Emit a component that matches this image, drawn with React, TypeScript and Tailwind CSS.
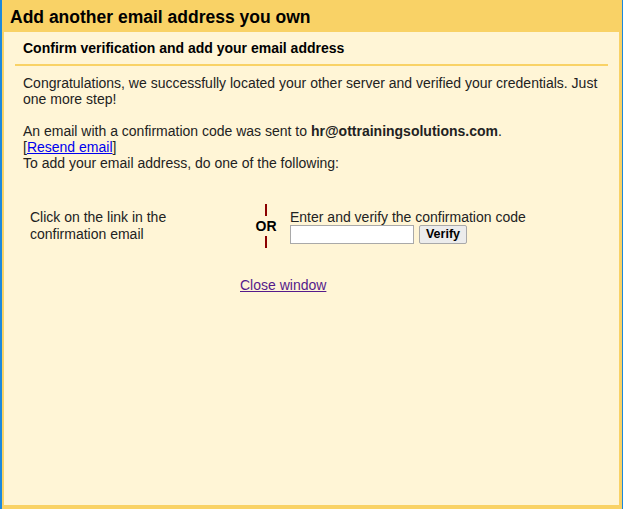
export default function App() {
  return (
    <div className="h-[509px] w-[623px] bg-[#1c88dc] pl-[2px] pr-[1px] font-['Liberation_Sans',Arial,sans-serif] text-[#222]">
      <div className="flex h-full flex-col bg-[#f9d266] px-[2px] pb-[4px] pr-[3px]">
        {/* Title bar */}
        <div className="flex h-[32px] items-center pl-[6px] pt-[2px] text-[17.5px] font-bold text-black">
          Add another email address you own
        </div>

        <div className="flex-1 bg-[#fff5d6] px-[11px] pt-[8px]">
          <div className="border-b-2 border-[#f9d266] px-[8px] pb-[7px] text-[14px] leading-[17px] font-bold text-black">
            Confirm verification and add your email address
          </div>

          <div className="px-[8px] pt-[9px] text-[14px] leading-[16px]">
            <p>
              Congratulations, we successfully located your other server and verified your credentials. Just one more step!
            </p>

            <div className="mt-[16px]">
              <div>
                An email with a confirmation code was sent to <b>hr@ottrainingsolutions.com</b>.
              </div>
              <div>
                [<a href="#" className="text-[#0000ee] underline">Resend email</a>]
              </div>
              <div>To add your email address, do one of the following:</div>
            </div>

            {/* Options */}
            <div className="mt-[33px] flex items-center">
              <div className="w-[223px] pl-[7px] leading-[17px]">
                Click on the link in the
                <br />
                confirmation email
              </div>
              <div className="flex w-[40px] flex-col items-center">
                <div className="h-[12px] w-[2px] bg-[#8b0000]" />
                <div className="py-[3px] text-[14px] font-bold leading-[14px] text-black">OR</div>
                <div className="h-[12px] w-[2px] bg-[#8b0000]" />
              </div>
              <div className="pl-[4px]">
                <div>Enter and verify the confirmation code</div>
                <div className="flex items-center gap-[5px]">
                  <input className="h-[19px] w-[124px] border border-[#a9a9a9] bg-white" />
                  <button className="h-[19px] w-[48px] rounded-[2px] border border-[#a9a9a9] bg-[#ececec] text-[12.5px] font-bold leading-[17px] text-black">
                    Verify
                  </button>
                </div>
              </div>
            </div>

            <div className="mt-[29px] pl-[217px]">
              <a href="#" className="text-[#551a8b] underline">Close window</a>
            </div>
          </div>
        </div>
      </div>
    </div>
  );
}
